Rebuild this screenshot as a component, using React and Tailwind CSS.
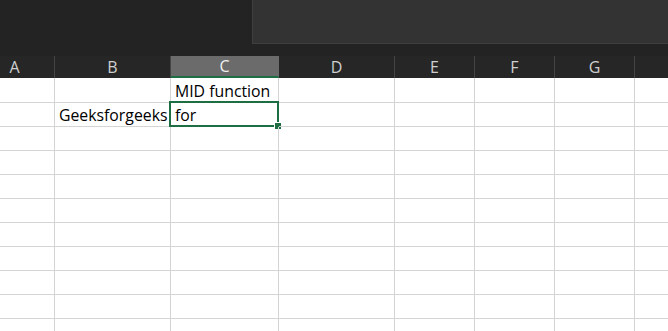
import React from 'react';

// column A is partly scrolled off to the left, so it's wider than what shows
const cols = [
  { key: 'A', w: 'w-[80px]' },
  { key: 'B', w: 'w-[116px]' },
  { key: 'C', w: 'w-[108px]' },
  { key: 'D', w: 'w-[116px]' },
  { key: 'E', w: 'w-[80px]' },
  { key: 'F', w: 'w-[80px]' },
  { key: 'G', w: 'w-[80px]' },
  { key: 'H', w: 'w-[80px]' },
];

const data = {
  '0-C': 'MID function',
  '1-B': 'Geeksforgeeks',
  '1-C': 'for',
};

function Cell({ row, col }) {
  const value = data[`${row}-${col.key}`];
  const selected = row === 1 && col.key === 'C';
  return (
    <div
      className={`relative shrink-0 ${col.w} ${row === 0 ? 'h-[25px]' : 'h-[24px]'} border-r border-b border-[#d4d4d4] flex items-end pl-[4px] pb-[1px] text-[15.8px] leading-[20px] text-black whitespace-nowrap`}
    >
      {value}
      {selected && (
        <div className="absolute -left-[2px] -top-[2px] -right-[1px] -bottom-[1px] border-2 border-[#1f6e43]">
          <div className="absolute -right-[5px] -bottom-[5px] w-[8px] h-[8px] bg-[#1f6e43] border border-white" />
        </div>
      )}
    </div>
  );
}

export default function App() {
  const rows = Array.from({ length: 11 }, (_, i) => i);

  return (
    <div
      className="w-[668px] h-[331px] overflow-hidden bg-white"
      style={{ fontFamily: '"Open Sans", "Noto Sans", sans-serif' }}
    >
      {/* top ribbon area */}
      <div className="h-[56px] bg-[#232323] flex">
        <div className="w-[252px] shrink-0" />
        <div className="flex-1 h-[44px] bg-[#333333] border-l border-b border-[#3f3f3f]" />
      </div>

      <div className="-ml-[25px]">
        {/* column headers */}
        <div className="h-[22px] bg-[#262626] flex">
          {cols.map((c) => (
            <div
              key={c.key}
              className={`shrink-0 ${c.w} h-full flex items-center justify-center text-[16px] border-r ${
                c.key === 'C'
                  ? 'bg-[#6b6b6b] text-[#f0f0f0] border-[#6b6b6b] border-b-2 border-b-[#1f6e43]'
                  : 'text-[#cfcfcf] border-[#444444]'
              }`}
            >
              {c.key === 'H' ? '' : c.key}
            </div>
          ))}
        </div>

        {/* grid */}
        <div className="flex flex-col">
          {rows.map((r) => (
            <div key={r} className="flex">
              {cols.map((c) => (
                <Cell key={c.key} row={r} col={c} />
              ))}
            </div>
          ))}
        </div>
      </div>
    </div>
  );
}
